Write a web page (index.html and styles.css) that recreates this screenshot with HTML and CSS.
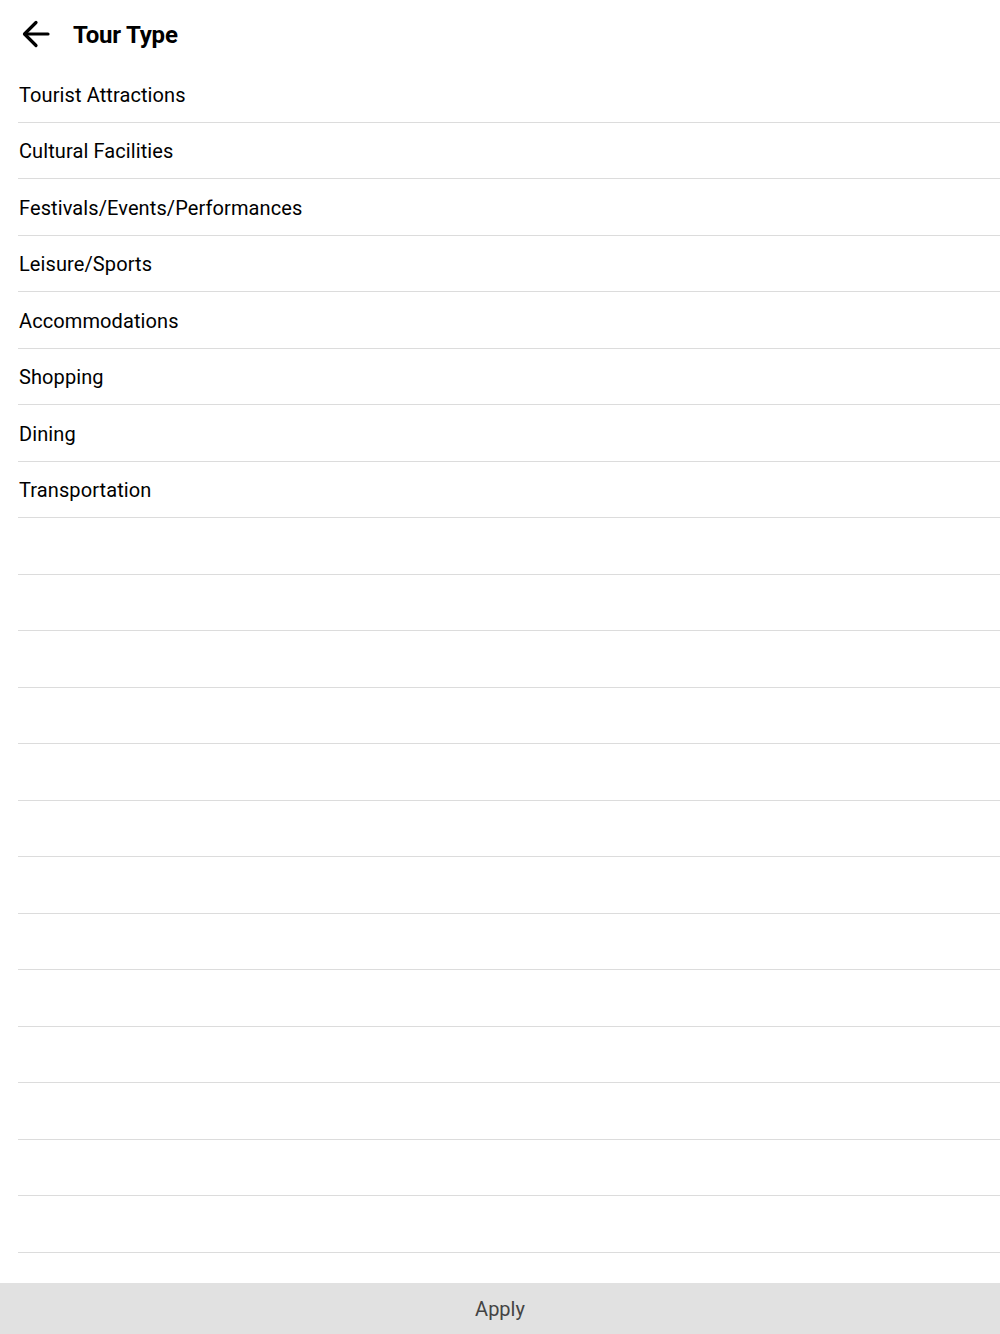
FILE: index.html
```html
<!DOCTYPE html>
<html lang="en">
<head>
<meta charset="utf-8">
<title>Tour Type</title>
<link rel="stylesheet" href="styles.css">
</head>
<body>
<div class="page">
  <header class="topbar">
    <button class="back" aria-label="Back">
      <svg width="28" height="28" viewBox="0 0 28 28" fill="none" stroke="#000" stroke-width="3.2" stroke-linecap="round" stroke-linejoin="round">
        <path d="M26 14H3"/>
        <path d="M14 2.5L2.5 14L14 25.5"/>
      </svg>
    </button>
    <h1 class="title">Tour Type</h1>
  </header>
  <ul class="list">
    <li class="row">Tourist Attractions</li>
    <li class="row">Cultural Facilities</li>
    <li class="row">Festivals/Events/Performances</li>
    <li class="row">Leisure/Sports</li>
    <li class="row">Accommodations</li>
    <li class="row">Shopping</li>
    <li class="row">Dining</li>
    <li class="row">Transportation</li>
    <li class="row"></li>
    <li class="row"></li>
    <li class="row"></li>
    <li class="row"></li>
    <li class="row"></li>
    <li class="row"></li>
    <li class="row"></li>
    <li class="row"></li>
    <li class="row"></li>
    <li class="row"></li>
    <li class="row"></li>
    <li class="row"></li>
    <li class="row"></li>
    <li class="row"></li>
  </ul>
  <footer class="footer">
    <button class="apply">Apply</button>
  </footer>
</div>
</body>
</html>
```

FILE: styles.css
```css
* { box-sizing: border-box; }
html, body {
  margin: 0;
  padding: 0;
  background: #fff;
}
body {
  font-family: Roboto, "Liberation Sans", Arial, sans-serif;
  color: #000;
}
.page {
  height: 1334px;
  display: flex;
  flex-direction: column;
  overflow: hidden;
}
.topbar {
  height: 66px;
  flex: 0 0 66px;
  display: flex;
  align-items: center;
  padding: 0 0 0 22px;
  gap: 23px;
}
.back {
  border: 0;
  background: none;
  padding: 0;
  width: 28px;
  height: 28px;
  display: flex;
  margin-top: 2px;
}
.title {
  margin: 0;
  font-size: 24px;
  font-weight: 700;
  letter-spacing: -0.2px;
  line-height: 1;
  margin-top: 4px;
}
.list {
  list-style: none;
  margin: 0;
  padding: 0 0 0 18px;
  flex: 1 1 auto;
  overflow: hidden;
}
.row {
  height: 56.5px;
  display: flex;
  align-items: center;
  padding-left: 1px;
  padding-top: 2px;
  font-size: 20px;
  letter-spacing: 0.1px;
  border-bottom: 1px solid #dcdcdc;
}
.footer {
  flex: 0 0 51px;
  background: #e1e1e1;
  display: flex;
}
.apply {
  flex: 1;
  border: 0;
  background: none;
  font-family: Roboto, "Liberation Sans", Arial, sans-serif;
  font-size: 20px;
  color: #444;
  padding: 0;
}
```
